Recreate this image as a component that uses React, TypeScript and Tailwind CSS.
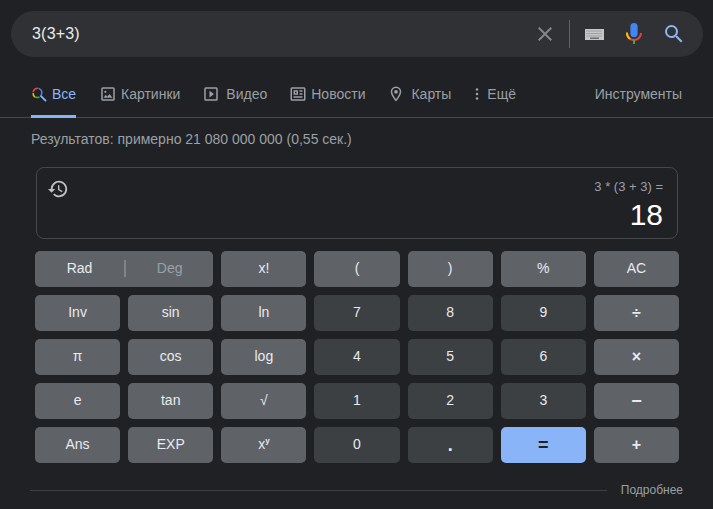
import React from 'react';

type Tone = 'light' | 'dark' | 'blue';

const keys: { label: React.ReactNode; tone: Tone; big?: string }[] = [
  { label: 'x!', tone: 'light' },
  { label: '(', tone: 'light' },
  { label: ')', tone: 'light' },
  { label: '%', tone: 'light' },
  { label: 'AC', tone: 'light' },
  { label: 'Inv', tone: 'light' },
  { label: 'sin', tone: 'light' },
  { label: 'ln', tone: 'light' },
  { label: '7', tone: 'dark' },
  { label: '8', tone: 'dark' },
  { label: '9', tone: 'dark' },
  { label: '÷', tone: 'light', big: 'text-base font-bold' },
  { label: 'π', tone: 'light' },
  { label: 'cos', tone: 'light' },
  { label: 'log', tone: 'light' },
  { label: '4', tone: 'dark' },
  { label: '5', tone: 'dark' },
  { label: '6', tone: 'dark' },
  { label: '×', tone: 'light', big: 'text-base font-bold' },
  { label: 'e', tone: 'light' },
  { label: 'tan', tone: 'light' },
  { label: '√', tone: 'light' },
  { label: '1', tone: 'dark' },
  { label: '2', tone: 'dark' },
  { label: '3', tone: 'dark' },
  { label: '−', tone: 'light', big: 'text-lg font-bold pb-px' },
  { label: 'Ans', tone: 'light' },
  { label: 'EXP', tone: 'light' },
  { label: <>x<span className="text-[8px] font-bold leading-none -translate-y-[3px]">y</span></>, tone: 'light' },
  { label: '0', tone: 'dark' },
  { label: '.', tone: 'dark', big: 'text-lg font-bold' },
  { label: '=', tone: 'blue', big: 'text-lg font-bold' },
  { label: '+', tone: 'light', big: 'text-base font-bold' },
];

const toneClass: Record<Tone, string> = {
  light: 'bg-[#5f6368] text-[#e8eaed]',
  dark: 'bg-[#3c4043] text-[#e8eaed]',
  blue: 'bg-[#8ab4f8] text-[#202124]',
};

const GoogleLens = () => (
  <svg width="16" height="16" viewBox="0 0 24 24" fill="none" strokeWidth="2.4" strokeLinecap="round">
    <path d="M10 3.300a7 7 0 0 0-6.600 5" stroke="#ea4335" />
    <path d="M3.300 11.500a7 7 0 0 0 2 4.600" stroke="#fbbc05" />
    <path d="M7 16.600a7 7 0 0 0 5 .4" stroke="#34a853" />
    <path d="M12.500 3.900a7 7 0 0 1 2 11.200" stroke="#4285f4" />
    <path d="M15.500 15.500L22 22" stroke="#8ab4f8" strokeWidth="2.800" />
  </svg>
);

const NavIcon = ({ d }: { d: string }) => (
  <svg width="18" height="18" viewBox="0 0 24 24" fill="#9aa0a6" className="-mt-px">
    <path d={d} />
  </svg>
);

const tabs = [
  { name: 'Картинки', ml: 'ml-[23px]', gap: 'gap-[4px]', d: 'M19 3H5a2 2 0 0 0-2 2v14a2 2 0 0 0 2 2h14a2 2 0 0 0 2-2V5a2 2 0 0 0-2-2zm0 16H5V5h14v14zm-5-7l-3 3.700L9 13l-3 4h12l-4-5zM8.500 10.500a1.500 1.500 0 1 0 0-3 1.500 1.500 0 0 0 0 3z' },
  { name: 'Видео', ml: 'ml-[22px]', gap: 'gap-[6px]', d: 'M10 16.500l6-4.500-6-4.500v9zM19 3H5a2 2 0 0 0-2 2v14a2 2 0 0 0 2 2h14a2 2 0 0 0 2-2V5a2 2 0 0 0-2-2zm0 16H5V5h14v14z' },
  { name: 'Новости', ml: 'ml-[22px]', gap: 'gap-[4px]', d: 'M20 3H4a2 2 0 0 0-2 2v14a2 2 0 0 0 2 2h16a2 2 0 0 0 2-2V5a2 2 0 0 0-2-2zm0 16H4V5h16v14zM6 7h6v6H6V7zm2 2v2h2V9H8zm6-2h4v2h-4V7zm0 4h4v2h-4v-2zM6 15h12v2H6v-2z' },
  { name: 'Карты', ml: 'ml-[22px]', gap: 'gap-[6px]', d: 'M12 2a7 7 0 0 0-7 7c0 5.300 7 13 7 13s7-7.700 7-13a7 7 0 0 0-7-7zm0 17c-2-2.600-5-7-5-10a5 5 0 0 1 10 0c0 2.900-3 7.400-5 10zm0-12.500a2.500 2.500 0 1 0 0 5 2.500 2.500 0 0 0 0-5z' },
];

export default function App() {
  return (
    <div className="w-[713px] h-[509px] overflow-hidden bg-[#202124] font-['Liberation_Sans',Arial,sans-serif]">
      {/* search box */}
      <div className="pt-[11px] pl-[11px] pr-[10px]">
        <div className="h-[46px] rounded-full bg-[#303134] flex items-center pl-[21px] pr-[17px] text-[#e8eaed] text-base">
          <span className="flex-1 tracking-[0.2px]">3(3+3)</span>
          <svg width="24" height="24" viewBox="0 0 24 24" fill="#82868b" className="mr-[12px]">
            <path d="M19 6.410L17.590 5 12 10.590 6.410 5 5 6.410 10.590 12 5 17.590 6.410 19 12 13.410 17.590 19 19 17.590 13.410 12z" />
          </svg>
          <div className="w-px h-[28px] bg-[#5f6368] mr-[15px]" />
          <svg width="19" height="11" viewBox="0 0 19 11" className="mr-[22px]">
            <rect width="19" height="11" fill="#c4c6c8" />
            <path d="M1.500 2h16M1.500 4.500h16M1.500 7h16" stroke="#6b6e72" strokeWidth="0.8" strokeDasharray="1 1" />
            <rect x="5" y="8.500" width="9" height="1.500" fill="#6b6e72" />
          </svg>
          <svg width="16" height="24" viewBox="0 0 16 24" className="mr-[20px]">
            <path d="M8 15a3.600 3.600 0 0 0 3.600-3.600V4.600a3.600 3.600 0 0 0-7.200 0v6.800A3.600 3.600 0 0 0 8 15z" fill="#4285f4" />
            <path d="M15 11a7 7 0 0 1-14 0" stroke="#ea4335" strokeWidth="2" fill="none" />
            <path d="M1 10.500v1a7 7 0 0 0 3 5.500" stroke="#fbbc05" strokeWidth="2" fill="none" />
            <rect x="7" y="18" width="2" height="4" fill="#34a853" />
          </svg>
          <svg width="24" height="24" viewBox="0 0 24 24" fill="#8ab4f8">
            <path d="M15.500 14h-.790l-.280-.270A6.470 6.470 0 0 0 16 9.500 6.500 6.500 0 1 0 9.500 16c1.610 0 3.090-.590 4.230-1.570l.270.280v.790l5 4.990L20.490 19l-4.990-5zm-6 0C7.010 14 5 11.990 5 9.500S7.010 5 9.500 5 14 7.010 14 9.500 11.990 14 9.500 14z" />
          </svg>
        </div>
      </div>

      {/* tabs */}
      <div className="mt-[20px] h-[41px] border-b border-[#46484c] pl-[31px] pr-[31px] flex text-sm text-[#9aa0a6]">
        <div className="w-[45px] border-b-[3px] border-[#8ab4f8] h-[41px] flex items-start pt-[9px] gap-[5px] text-[#8ab4f8]">
          <GoogleLens />
          <span className="leading-[16px]">Все</span>
        </div>
        {tabs.map((t) => (
          <div key={t.name} className={`${t.ml} ${t.gap} flex items-start pt-[9px]`}>
            <NavIcon d={t.d} />
            <span className="leading-[16px]">{t.name}</span>
          </div>
        ))}
        <div className="ml-[24px] flex items-start pt-[9px] gap-[8px]">
          <svg width="4" height="16" viewBox="0 0 4 16" fill="#9aa0a6">
            <circle cx="2" cy="3.500" r="1.300" />
            <circle cx="2" cy="8" r="1.300" />
            <circle cx="2" cy="12.500" r="1.300" />
          </svg>
          <span className="leading-[16px]">Ещё</span>
        </div>
        <span className="ml-auto mt-[9px] leading-[16px]">Инструменты</span>
      </div>

      <div className="pl-[31px] mt-[13px] text-sm leading-[16px] text-[#9aa0a6]">
        Результатов: примерно 21 080 000 000 (0,55 сек.)
      </div>

      {/* calculator */}
      <div className="mt-[20px] ml-[35px] w-[644px]">
        <div className="mx-px h-[72px] rounded-lg border border-[#46484c] flex justify-between pl-[10px] pr-[14px]">
          <svg width="22" height="22" viewBox="0 0 24 24" fill="#bdc1c6" className="mt-[10px]">
            <path d="M13 3a9 9 0 0 0-9 9H1l3.890 3.890.070.140L9 12H6a7 7 0 1 1 2.050 4.950l-1.420 1.420A9 9 0 1 0 13 3zm-1 5v5l4.250 2.520.770-1.280-3.520-2.090V8H12z" />
          </svg>
          <div className="text-right pt-[11px]">
            <div className="text-[13px] leading-[16px] text-[#9aa0a6]">3 * (3 + 3) =</div>
            <div className="text-[30px] leading-[34px] text-white pt-[3px]">18</div>
          </div>
        </div>

        <div className="mt-[12px] grid grid-cols-7 gap-2">
          <div className="col-span-2 h-9 rounded-[5px] bg-[#5f6368] flex items-center text-sm pb-[2px]">
            <span className="w-[89px] text-center text-[#e8eaed]">Rad</span>
            <span className="w-0.5 h-[17px] bg-[#80858a]" />
            <span className="flex-1 text-center text-[#9aa0a6]">Deg</span>
          </div>
          {keys.map((k, i) => (
            <div
              key={i}
              className={`h-9 rounded-[5px] flex items-center justify-center ${toneClass[k.tone]} ${k.big ? k.big : 'text-sm pb-[2px]'}`}
            >
              {k.label}
            </div>
          ))}
        </div>
      </div>

      {/* more link */}
      <div className="mt-[20px] pl-[30px] pr-[30px] flex items-center gap-[14px]">
        <div className="flex-1 h-px bg-[#3c4043]" />
        <span className="text-xs leading-[14px] text-[#9aa0a6]">Подробнее</span>
      </div>
    </div>
  );
}
